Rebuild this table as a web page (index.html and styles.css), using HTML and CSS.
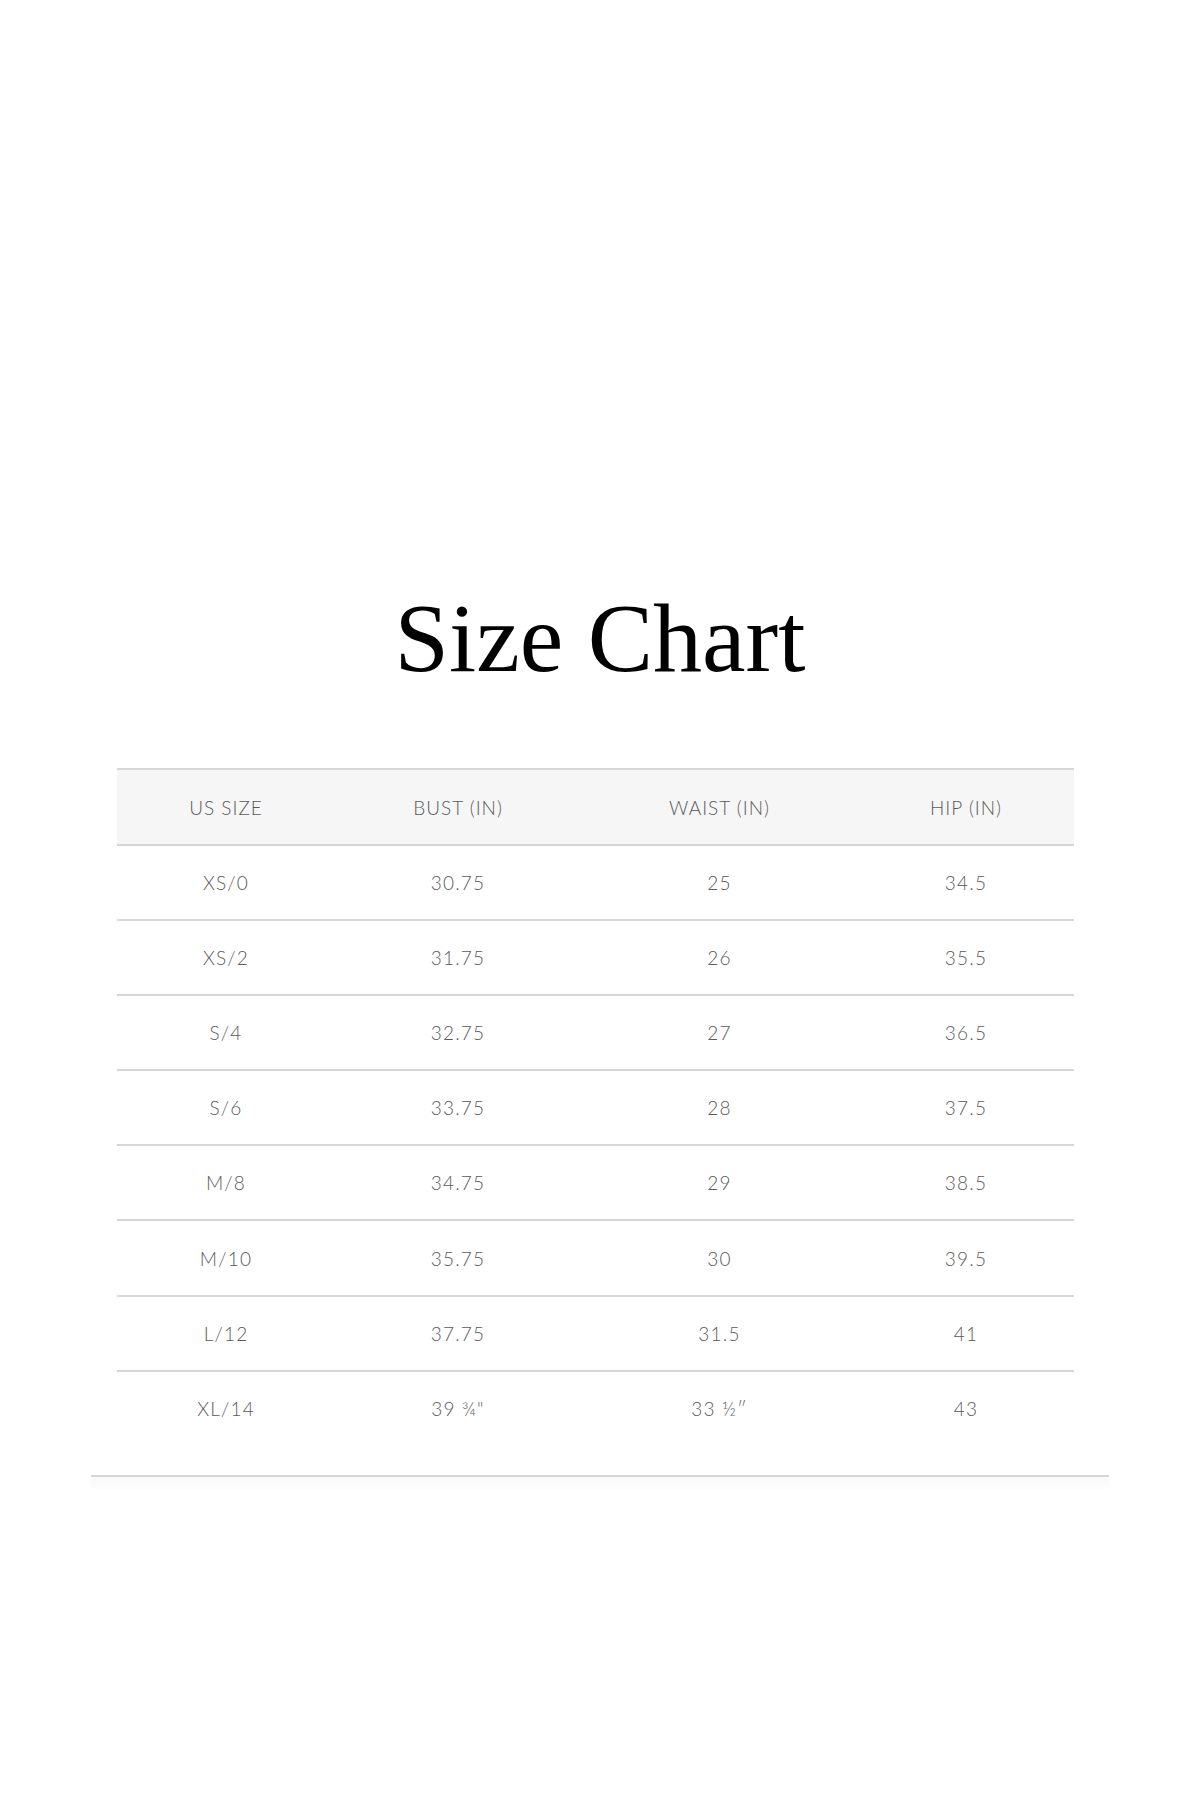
FILE: index.html
```html
<!DOCTYPE html>
<html lang="en">
<head>
<meta charset="utf-8">
<title>Size Chart</title>
<link rel="stylesheet" href="styles.css">
</head>
<body>
<main class="page">
  <h1 class="title">Size Chart</h1>
  <section class="chart">
    <table class="size-table">
      <colgroup>
        <col class="c1"><col class="c2"><col class="c3"><col class="c4">
      </colgroup>
      <thead>
        <tr><th>US SIZE</th><th>BUST (IN)</th><th>WAIST (IN)</th><th>HIP (IN)</th></tr>
      </thead>
      <tbody>
        <tr><td>XS/0</td><td>30.75</td><td>25</td><td>34.5</td></tr>
        <tr><td>XS/2</td><td>31.75</td><td>26</td><td>35.5</td></tr>
        <tr><td>S/4</td><td>32.75</td><td>27</td><td>36.5</td></tr>
        <tr><td>S/6</td><td>33.75</td><td>28</td><td>37.5</td></tr>
        <tr><td>M/8</td><td>34.75</td><td>29</td><td>38.5</td></tr>
        <tr><td>M/10</td><td>35.75</td><td>30</td><td>39.5</td></tr>
        <tr><td>L/12</td><td>37.75</td><td>31.5</td><td>41</td></tr>
        <tr><td>XL/14</td><td>39 ¾"</td><td>33 ½″</td><td>43</td></tr>
      </tbody>
    </table>
    <div class="chart-foot"></div>
  </section>
</main>
</body>
</html>
```

FILE: styles.css
```css
html, body {
  margin: 0;
  padding: 0;
  background: #ffffff;
}

.page {
  padding-top: 589px;
}

.title {
  margin: 0;
  font-family: "Liberation Serif", "Times New Roman", serif;
  font-weight: normal;
  font-size: 98px;
  line-height: 1;
  color: #000;
  text-align: center;
}

.chart {
  width: 1018px;
  margin: 81px auto 0;
}

.size-table {
  margin-left: 26px;
  width: 957px;
  border-collapse: collapse;
  font-family: "Lato", "Open Sans", sans-serif;
  font-weight: 300;
  color: #5a5a5a;
}

.c1 { width: 218px; }
.c2 { width: 246px; }
.c3 { width: 277px; }
.c4 { width: 216px; }

.size-table th,
.size-table td {
  padding: 0;
  text-align: center;
  font-weight: 300;
}

.size-table th {
  height: 74px;
  background: #f6f6f6;
  border-top: 2px solid #d6d6d6;
  border-bottom: 2px solid #d6d6d6;
  font-size: 19px;
  letter-spacing: 1px;
}

.size-table td {
  height: 73.1px;
  font-size: 19px;
  letter-spacing: 1.2px;
  border-bottom: 2px solid #d6d6d6;
}

.size-table tbody tr:last-child td {
  border-bottom: none;
}

.chart-foot {
  margin-top: 30px;
  height: 12px;
  border-top: 2px solid #d6d6d6;
  background: linear-gradient(#f9f9f9, #fdfdfd);
}
```
